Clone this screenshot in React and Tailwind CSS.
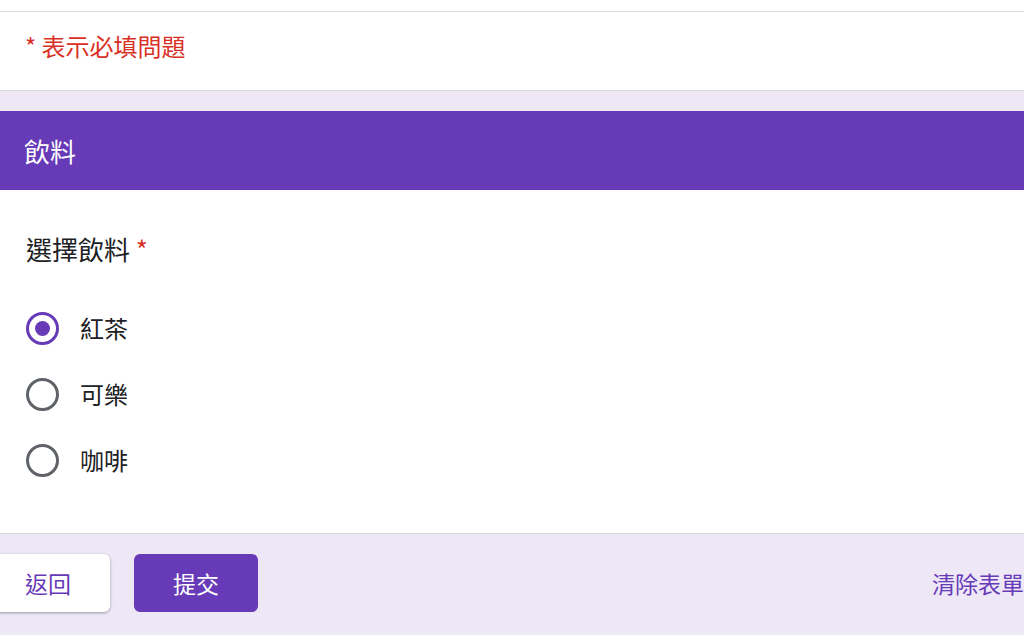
export default function App() {
  const font = { fontFamily: '"Noto Sans CJK TC", "Noto Sans", sans-serif' };
  const options = ["紅茶", "可樂", "咖啡"];
  return (
    <div className="w-[1024px] h-[635px] overflow-hidden bg-[#ede7f6] flex flex-col" style={font}>
      <div className="h-[11px] bg-white shrink-0" />
      <div className="h-[80px] bg-white border-y border-[#dadce0] shrink-0 pl-[25px] pt-[22px]">
        <div className="text-[24px] leading-[24px] text-[#d93025]">* 表示必填問題</div>
      </div>
      <div className="h-[20px] shrink-0" />
      <div className="h-[79px] bg-[#673ab7] shrink-0 flex items-center px-[24px]">
        <div className="text-[26px] leading-[28px] text-white">飲料</div>
      </div>
      <div className="h-[344px] bg-white border-b border-[#dadce0] shrink-0 pl-[26px] pt-[45px]">
        <div className="text-[26px] leading-[28px] text-[#202124]">
          選擇飲料 <span className="text-[#d93025]">*</span>
        </div>
        <div className="mt-[32px] flex flex-col">
          {options.map((o, i) => (
            <div key={o} className="h-[66px] flex items-center gap-[21px]">
              <div
                className={
                  "w-[33px] h-[33px] rounded-full border-[3px] flex items-center justify-center shrink-0 " +
                  (i === 0 ? "border-[#673ab7]" : "border-[#5f6368]")
                }
              >
                {i === 0 && <div className="w-[15px] h-[15px] rounded-full bg-[#673ab7]" />}
              </div>
              <div className="text-[24px] leading-[28px] text-[#202124]">{o}</div>
            </div>
          ))}
        </div>
      </div>
      <div className="flex items-start pt-[20px]">
        <button className="-ml-[14px] w-[126px] h-[58px] bg-white rounded-[6px] shadow-[0_1px_3px_rgba(0,0,0,0.35)] text-[23px] text-[#673ab7] flex items-center justify-center">
          返回
        </button>
        <button className="ml-[24px] w-[126px] h-[58px] bg-[#673ab7] rounded-[6px] text-[23px] text-white flex items-center justify-center">
          提交
        </button>
        <div className="ml-[674px] h-[58px] flex items-center text-[23px] text-[#673ab7] whitespace-nowrap shrink-0">
          清除表單
        </div>
      </div>
    </div>
  );
}
